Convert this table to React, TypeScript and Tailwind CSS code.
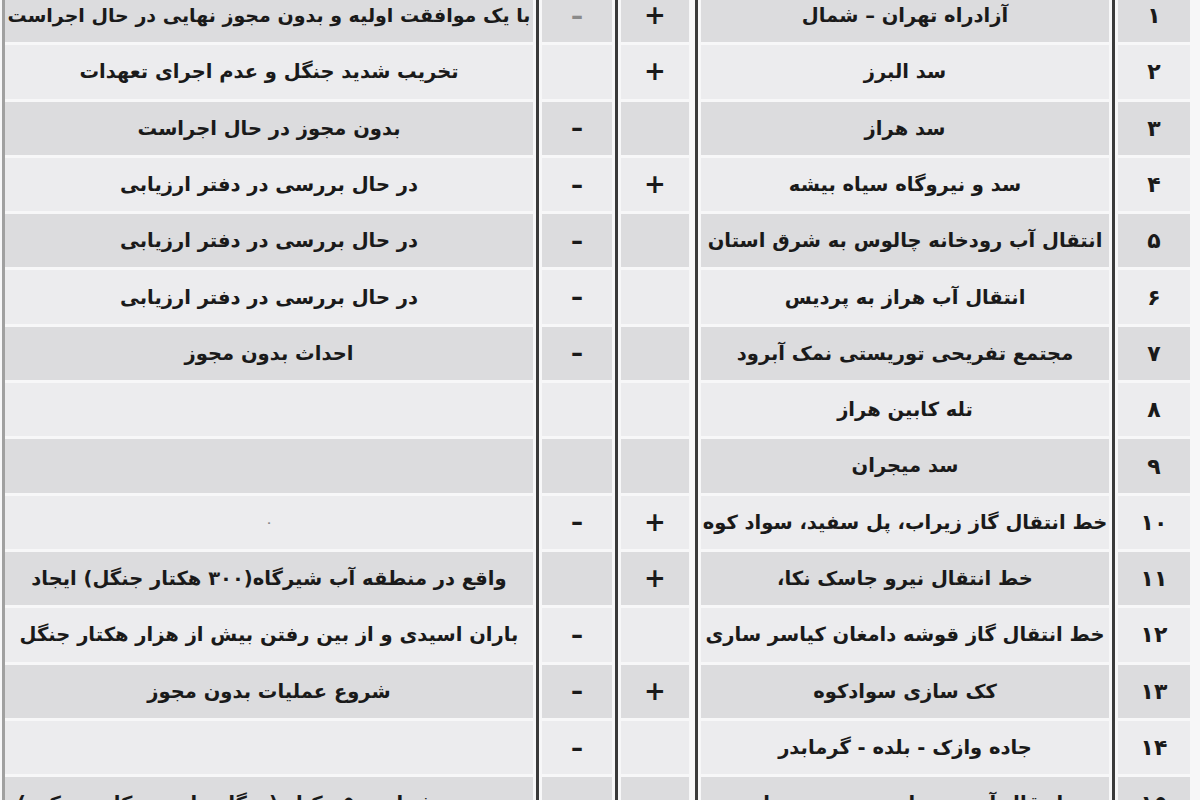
const rows: [string, string, string, string, string][] = [
  ["۱", "آزادراه تهران – شمال", "+", "–", "با یک موافقت اولیه و بدون مجوز نهایی در حال اجراست"],
  ["۲", "سد البرز", "+", "", "تخریب شدید جنگل و عدم اجرای تعهدات"],
  ["۳", "سد هراز", "", "–", "بدون مجوز در حال اجراست"],
  ["۴", "سد و نیروگاه سیاه بیشه", "+", "–", "در حال بررسی در دفتر ارزیابی"],
  ["۵", "انتقال آب رودخانه چالوس به شرق استان", "", "–", "در حال بررسی در دفتر ارزیابی"],
  ["۶", "انتقال آب هراز به پردیس", "", "–", "در حال بررسی در دفتر ارزیابی"],
  ["۷", "مجتمع تفریحی توریستی نمک آبرود", "", "–", "احداث بدون مجوز"],
  ["۸", "تله کابین هراز", "", "", ""],
  ["۹", "سد میجران", "", "", ""],
  ["۱۰", "خط انتقال گاز زیراب، پل سفید، سواد کوه", "+", "–", "۰"],
  ["۱۱", "خط انتقال نیرو جاسک نکا،", "+", "", "واقع در منطقه آب شیرگاه(۳۰۰ هکتار جنگل) ایجاد"],
  ["۱۲", "خط انتقال گاز قوشه دامغان کیاسر ساری", "", "–", "باران اسیدی و از بین رفتن بیش از هزار هکتار جنگل"],
  ["۱۳", "کک سازی سوادکوه", "+", "–", "شروع عملیات بدون مجوز"],
  ["۱۴", "جاده وازک - بلده - گرمابدر", "", "–", ""],
  ["۱۵", "انتقال آب رودخانه تجن به سمنان", "", "", "تخریب بیش از ۵۰۰ هکتار (جنگل های هیرکانی و کوه)"],
];

const Line = () => <div className="w-[3px] shrink-0 bg-[#3a3a3a]" />;
const Gap = ({ w = "w-[3px]" }: { w?: string }) => <div className={`${w} shrink-0`} />;

// the first description is long, so it is set a touch smaller
function descSize(i: number, text: string) {
  if (text === "۰") return "text-[10px] text-[#888]";
  if (i === 0) return "text-[19px]";
  return "text-[19.5px]";
}

export default function App() {
  return (
    <div className="h-[800px] w-[1200px] overflow-hidden bg-[#f7f7f8] font-['DejaVu_Sans',sans-serif] font-bold text-[#1a1a1a]">
      <div dir="rtl" className="mt-[-11px] flex flex-col">
        {rows.map((r, i) => {
          const bg = i % 2 === 0 ? "bg-[#dcdcde]" : "bg-[#ececee]";
          return (
            <div key={i} className="flex h-[56.3px] pr-[10px] pl-[2px]">
              {/* number */}
              <div className="w-[72px] shrink-0 pb-[3px]">
                <div className={`flex h-full items-center justify-center text-[22px] ${bg}`}>{r[0]}</div>
              </div>
              <Gap />
              <Line />
              <Gap />
              {/* name */}
              <div className="w-[408px] shrink-0 overflow-hidden pb-[3px]">
                <div className={`flex h-full items-center justify-center whitespace-nowrap text-[19.5px] ${bg}`}>{r[1]}</div>
              </div>
              <Gap />
              <Line />
              <Gap w="w-[6px]" />
              {/* plus */}
              <div className="w-[68px] shrink-0 pb-[3px]">
                <div className={`flex h-full items-center justify-center text-[26px] ${bg}`}>{r[2]}</div>
              </div>
              <Gap />
              <Line />
              <Gap />
              {/* minus */}
              <div className="w-[70px] shrink-0 pb-[3px]">
                <div className={`flex h-full items-center justify-center text-[24px] ${i === 0 ? "text-[#8a8a8a]" : ""} ${bg}`}>{r[3]}</div>
              </div>
              <Gap />
              <Line />
              <Gap />
              {/* description */}
              <div className="min-w-0 flex-1 overflow-hidden pb-[3px]">
                <div className={`flex h-full items-center justify-center whitespace-nowrap ${descSize(i, r[4])} ${bg}`}>{r[4]}</div>
              </div>
              <div className="w-[3px] shrink-0 bg-[#a0a0a0]" />
            </div>
          );
        })}
      </div>
    </div>
  );
}
